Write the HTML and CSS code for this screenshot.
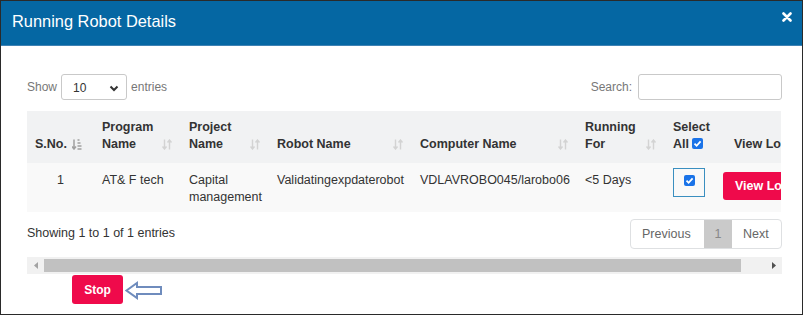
FILE: index.html
```html
<!DOCTYPE html>
<html>
<head>
<meta charset="utf-8">
<link rel="stylesheet" href="styles.css">
</head>
<body>
<div class="modal">
  <div class="modal-header">
    <span class="title">Running Robot Details</span>
    <svg class="close" width="10" height="10" viewBox="0 0 10 10"><path d="M1.5 1.5 L8.5 8.5 M8.5 1.5 L1.5 8.5" stroke="#fff" stroke-width="2.6" stroke-linecap="round"/></svg>
  </div>
  <div class="modal-body">
    <div class="controls">
      <div class="length">
        <span>Show</span>
        <div class="select"><span>10</span>
          <svg width="10" height="7" viewBox="0 0 10 7"><path d="M1.5 1.5 L5 5 L8.5 1.5" fill="none" stroke="#333" stroke-width="2"/></svg>
        </div>
        <span>entries</span>
      </div>
      <div class="search">
        <span>Search:</span>
        <div class="input"></div>
      </div>
    </div>
    <div class="table-wrap">
      <table class="grid">
        <colgroup>
          <col class="c1"><col class="c2"><col class="c3"><col class="c4"><col class="c5"><col class="c6"><col class="c7"><col class="c8">
        </colgroup>
        <thead>
          <tr>
            <th><div class="th"><span>S.No.</span>
              <svg class="sort" width="10" height="11" viewBox="0 0 10 11"><path d="M2 0.5 V9.5 M0 7.5 L2 10 L4 7.5" fill="none" stroke="#a0a0a0" stroke-width="1.5"/><path d="M5.5 1 H7.5 M5.5 4 H8.5 M5.5 7 H9.5 M5.5 10 H9.5" stroke="#a0a0a0" stroke-width="1.4"/></svg></div></th>
            <th><div class="th"><span>Program<br>Name</span>
              <svg class="sort" width="10" height="11" viewBox="0 0 10 11"><path d="M2.5 0.5 V10 M0.5 7.5 L2.5 10 L4.5 7.5 M7.5 10.5 V1 M5.5 3.5 L7.5 1 L9.5 3.5" fill="none" stroke="#d3d3d3" stroke-width="1.4"/></svg></div></th>
            <th><div class="th"><span>Project<br>Name</span>
              <svg class="sort" width="10" height="11" viewBox="0 0 10 11"><path d="M2.5 0.5 V10 M0.5 7.5 L2.5 10 L4.5 7.5 M7.5 10.5 V1 M5.5 3.5 L7.5 1 L9.5 3.5" fill="none" stroke="#d3d3d3" stroke-width="1.4"/></svg></div></th>
            <th><div class="th"><span>Robot Name</span>
              <svg class="sort" width="10" height="11" viewBox="0 0 10 11"><path d="M2.5 0.5 V10 M0.5 7.5 L2.5 10 L4.5 7.5 M7.5 10.5 V1 M5.5 3.5 L7.5 1 L9.5 3.5" fill="none" stroke="#d3d3d3" stroke-width="1.4"/></svg></div></th>
            <th><div class="th"><span>Computer Name</span>
              <svg class="sort" width="10" height="11" viewBox="0 0 10 11"><path d="M2.5 0.5 V10 M0.5 7.5 L2.5 10 L4.5 7.5 M7.5 10.5 V1 M5.5 3.5 L7.5 1 L9.5 3.5" fill="none" stroke="#d3d3d3" stroke-width="1.4"/></svg></div></th>
            <th><div class="th"><span>Running<br>For</span>
              <svg class="sort" width="10" height="11" viewBox="0 0 10 11"><path d="M2.5 0.5 V10 M0.5 7.5 L2.5 10 L4.5 7.5 M7.5 10.5 V1 M5.5 3.5 L7.5 1 L9.5 3.5" fill="none" stroke="#d3d3d3" stroke-width="1.4"/></svg></div></th>
            <th class="sel"><div class="th"><span>Select<br>All <svg class="cb" width="11" height="11" viewBox="0 0 11 11"><rect x="0" y="0" width="11" height="11" rx="2" fill="#1a73e8"/><path d="M2.5 5.7 L4.6 7.8 L8.6 3.3" fill="none" stroke="#fff" stroke-width="1.8"/></svg></span></div></th>
            <th class="logh"><div class="th"><span>View Log</span></div></th>
          </tr>
        </thead>
        <tbody>
          <tr>
            <td class="num">1</td>
            <td>AT&amp; F tech</td>
            <td>Capital management</td>
            <td>Validatingexpdaterobot</td>
            <td>VDLAVROBO045/larobo06</td>
            <td>&lt;5 Days</td>
            <td class="cbcell"><div class="cbox"><svg class="cb" width="11" height="11" viewBox="0 0 11 11"><rect x="0" y="0" width="11" height="11" rx="2" fill="#1a73e8"/><path d="M2.5 5.7 L4.6 7.8 L8.6 3.3" fill="none" stroke="#fff" stroke-width="1.8"/></svg></div></td>
            <td class="btncell"><span class="btn-log">View Log</span></td>
          </tr>
        </tbody>
      </table>
    </div>
    <div class="info-row">
      <span class="info">Showing 1 to 1 of 1 entries</span>
      <div class="pager">
        <span class="pg">Previous</span>
        <span class="pg active">1</span>
        <span class="pg">Next</span>
      </div>
    </div>
    <div class="scrollbar">
      <div class="sb-btn"><svg width="4" height="7" viewBox="0 0 4 7"><path d="M4 0 L0 3.5 L4 7 Z" fill="#a3a3a3"/></svg></div>
      <div class="sb-thumb"></div>
      <div class="sb-space"></div>
      <div class="sb-btn"><svg width="4" height="7" viewBox="0 0 4 7"><path d="M0 0 L4 3.5 L0 7 Z" fill="#505050"/></svg></div>
    </div>
    <div class="actions">
      <span class="btn-stop">Stop</span>
      <svg class="arrow" width="38" height="19" viewBox="0 0 38 19"><path d="M1.5 9.5 L12 2 L12 6 L36 6 L36 13 L12 13 L12 17 Z" fill="#fff" stroke="#6f8cbd" stroke-width="2" stroke-linejoin="miter"/></svg>
    </div>
  </div>
</div>
</body>
</html>
```
FILE: styles.css
```css
* { box-sizing: border-box; }
html, body { margin: 0; padding: 0; background: #fff; }
body { font-family: "Liberation Sans", Arial, sans-serif; color: #333; }

.modal {
  width: 803px;
  height: 315px;
  border: 1px solid #2a2a2a;
  overflow: hidden;
  display: flex;
  flex-direction: column;
}
.modal-header {
  height: 45px;
  background: #0567a3;
  border-bottom: 1px solid #3f82b4;
  display: flex;
  align-items: center;
  justify-content: space-between;
  padding: 0 10px 3px 11px;
  flex: none;
}
.title { color: #fff; font-size: 16.4px; }
.close { margin-top: -10px; margin-right: 0; }

.modal-body {
  padding: 28px 20px 0 26px;
  display: flex;
  flex-direction: column;
}
.controls {
  display: flex;
  justify-content: space-between;
  align-items: center;
  height: 26px;
  font-size: 12px;
  color: #777;
}
.length, .search { display: flex; align-items: center; }
.select {
  width: 66px;
  height: 26px;
  border: 1px solid #c9c9c9;
  border-radius: 3px;
  margin: 0 4px 0 4px;
  display: flex;
  align-items: center;
  justify-content: space-between;
  padding: 2px 7px 0 11px;
  color: #333;
  font-size: 12px;
}
.input {
  width: 144px;
  height: 26px;
  border: 1px solid #c9c9c9;
  border-radius: 3px;
  margin-left: 6px;
}

.table-wrap {
  margin-top: 11px;
  width: 754px;
  overflow: hidden;
}
.grid {
  border-collapse: collapse;
  table-layout: fixed;
  width: 788px;
  font-size: 12.5px;
  line-height: 17px;
}
.c1 { width: 67px; } .c2 { width: 87px; } .c3 { width: 88px; } .c4 { width: 143px; }
.c5 { width: 165px; } .c6 { width: 88px; } .c7 { width: 50px; } .c8 { width: 100px; }
.grid th {
  background: #f1f2f3;
  text-align: left;
  vertical-align: bottom;
  padding: 7px 9px 10px 8px;
  font-weight: bold;
  color: #333;
  height: 52px;
  white-space: nowrap;
}
.grid th.logh { padding-left: 19px; padding-right: 0; }
.th { display: flex; align-items: flex-end; justify-content: space-between; }
.sort { margin-bottom: 3px; flex: none; }
.grid th:first-child .sort { margin-right: 3px; }
.sel { padding-right: 0; }
.cb { vertical-align: -1px; }
.grid td {
  background: #f9f9f9;
  vertical-align: top;
  padding: 9px 8px 6px 8px;
  height: 49px;
  color: #333;
}
.grid td.num { text-align: center; padding-left: 0; padding-right: 0; }
.grid td.cbcell { padding: 5px 0 0 8px; }
.cbox {
  width: 32px;
  height: 29px;
  border: 1px solid #3a8fc0;
  display: flex;
  align-items: center;
  justify-content: center;
  padding-bottom: 4px;
}
.grid td.btncell { padding: 9px 0 0 8px; white-space: nowrap; }
.btn-log {
  display: inline-block;
  background: #ef0a4b;
  color: #fff;
  font-weight: bold;
  font-size: 12.5px;
  height: 28px;
  line-height: 28px;
  padding: 0 12px;
  border-radius: 3px;
}

.info-row {
  margin-top: 7px;
  width: 755px;
  display: flex;
  justify-content: space-between;
  align-items: center;
  font-size: 12.5px;
}
.info { margin-top: -2px; }
.pager {
  display: flex;
  border: 1px solid #dee0e2;
  border-radius: 4px;
  height: 30px;
  overflow: hidden;
}
.pg {
  display: flex;
  align-items: center;
  padding: 0 11px;
  color: #666;
}
.pg:first-child { width: 73px; }
.pg.active { background: #cacaca; color: #888; width: 28px; justify-content: center; padding: 0; }
.pg:last-child { width: 49px; }

.scrollbar {
  margin-top: 8px;
  width: 755px;
  height: 17px;
  background: #f1f1f1;
  display: flex;
  align-items: center;
}
.sb-btn { width: 17px; height: 17px; display: flex; align-items: center; justify-content: center; flex: none; }
.sb-thumb { width: 697px; height: 13px; background: #c1c1c1; flex: none; }
.sb-space { flex: 1; }

.actions {
  margin-top: 1px;
  display: flex;
  align-items: center;
  padding-left: 45px;
}
.btn-stop {
  width: 51px;
  height: 29px;
  background: #ef0a4b;
  color: #fff;
  font-weight: bold;
  font-size: 12px;
  border-radius: 3px;
  display: flex;
  align-items: center;
  justify-content: center;
}
.arrow { margin-left: 2px; margin-top: 1px; }
```
